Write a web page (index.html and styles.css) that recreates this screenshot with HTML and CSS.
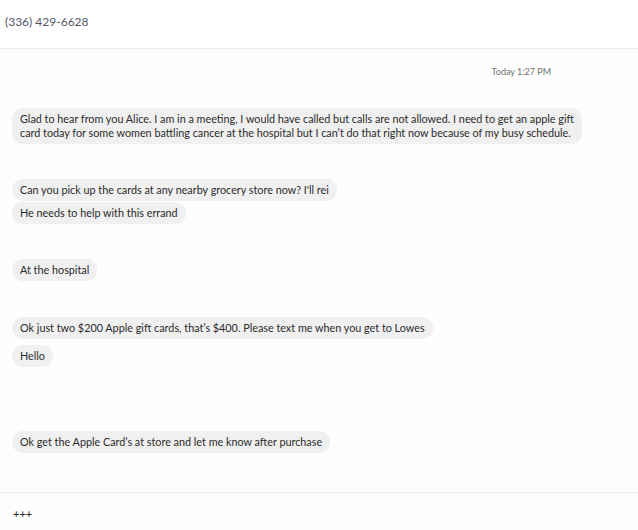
FILE: index.html
```html
<!DOCTYPE html>
<html>
<head>
<meta charset="utf-8">
<link rel="stylesheet" href="styles.css">
</head>
<body>
<div class="app">
  <header class="header">
    <span class="phone">(336) 429-6628</span>
  </header>
  <main class="thread">
    <div class="stamp">Today 1:27 PM</div>
    <div class="msg gap-first"><div class="bubble">Glad to hear from you Alice. I am in a meeting, I would have called but calls are not allowed. I need to get an apple gift<br>card today for some women battling cancer at the hospital but I can’t do that right now because of my busy schedule.</div></div>
    <div class="msg gap-l"><div class="bubble">Can you pick up the cards at any nearby grocery store now? I'll rei</div></div>
    <div class="msg gap-s"><div class="bubble">He needs to help with this errand</div></div>
    <div class="msg gap-l"><div class="bubble">At the hospital</div></div>
    <div class="msg gap-l2"><div class="bubble">Ok just two $200 Apple gift cards, that’s $400. Please text me when you get to Lowes</div></div>
    <div class="msg gap-m"><div class="bubble">Hello</div></div>
    <div class="msg gap-xl"><div class="bubble">Ok get the Apple Card’s at store and let me know after purchase</div></div>
  </main>
  <footer class="composer">
    <span class="draft">+++</span>
  </footer>
</div>
</body>
</html>
```
FILE: styles.css
```css
html, body {
  margin: 0;
  padding: 0;
  background: #ffffff;
}
body {
  font-family: "Segoe UI", "Lato", "Open Sans", sans-serif;
  color: #2b2b2b;
}
.app {
  width: 638px;
  height: 530px;
  display: flex;
  flex-direction: column;
}
.header {
  height: 49px;
  border-bottom: 1px solid #ebebeb;
  display: flex;
  align-items: center;
  padding-left: 5px;
  padding-bottom: 5px;
  box-sizing: border-box;
  background: #ffffff;
}
.phone {
  font-size: 12px;
  color: #515868;
}
.thread {
  height: 443px;
  box-sizing: border-box;
  padding: 17px 0 0 12px;
  background: #fefefe;
  display: flex;
  flex-direction: column;
}
.stamp {
  align-self: flex-end;
  margin-right: 87px;
  font-size: 9px;
  line-height: 12px;
  color: #707070;
}
.msg {
  display: flex;
}
.bubble {
  background: #f0f0f0;
  border-radius: 11px;
  padding: 4px 8px;
  font-size: 10.8px;
  line-height: 14px;
  white-space: nowrap;
}
.gap-first { margin-top: 30px; }
.gap-l { margin-top: 35px; }
.gap-l2 { margin-top: 36px; }
.gap-s { margin-top: 1px; }
.gap-m { margin-top: 6px; }
.gap-xl { margin-top: 64px; }
.composer {
  flex: 1;
  border-top: 1px solid #ebebeb;
  background: #fefefe;
  display: flex;
  align-items: center;
  padding-left: 13px;
  padding-top: 4px;
}
.draft {
  font-size: 11px;
  color: #262626;
}
```
